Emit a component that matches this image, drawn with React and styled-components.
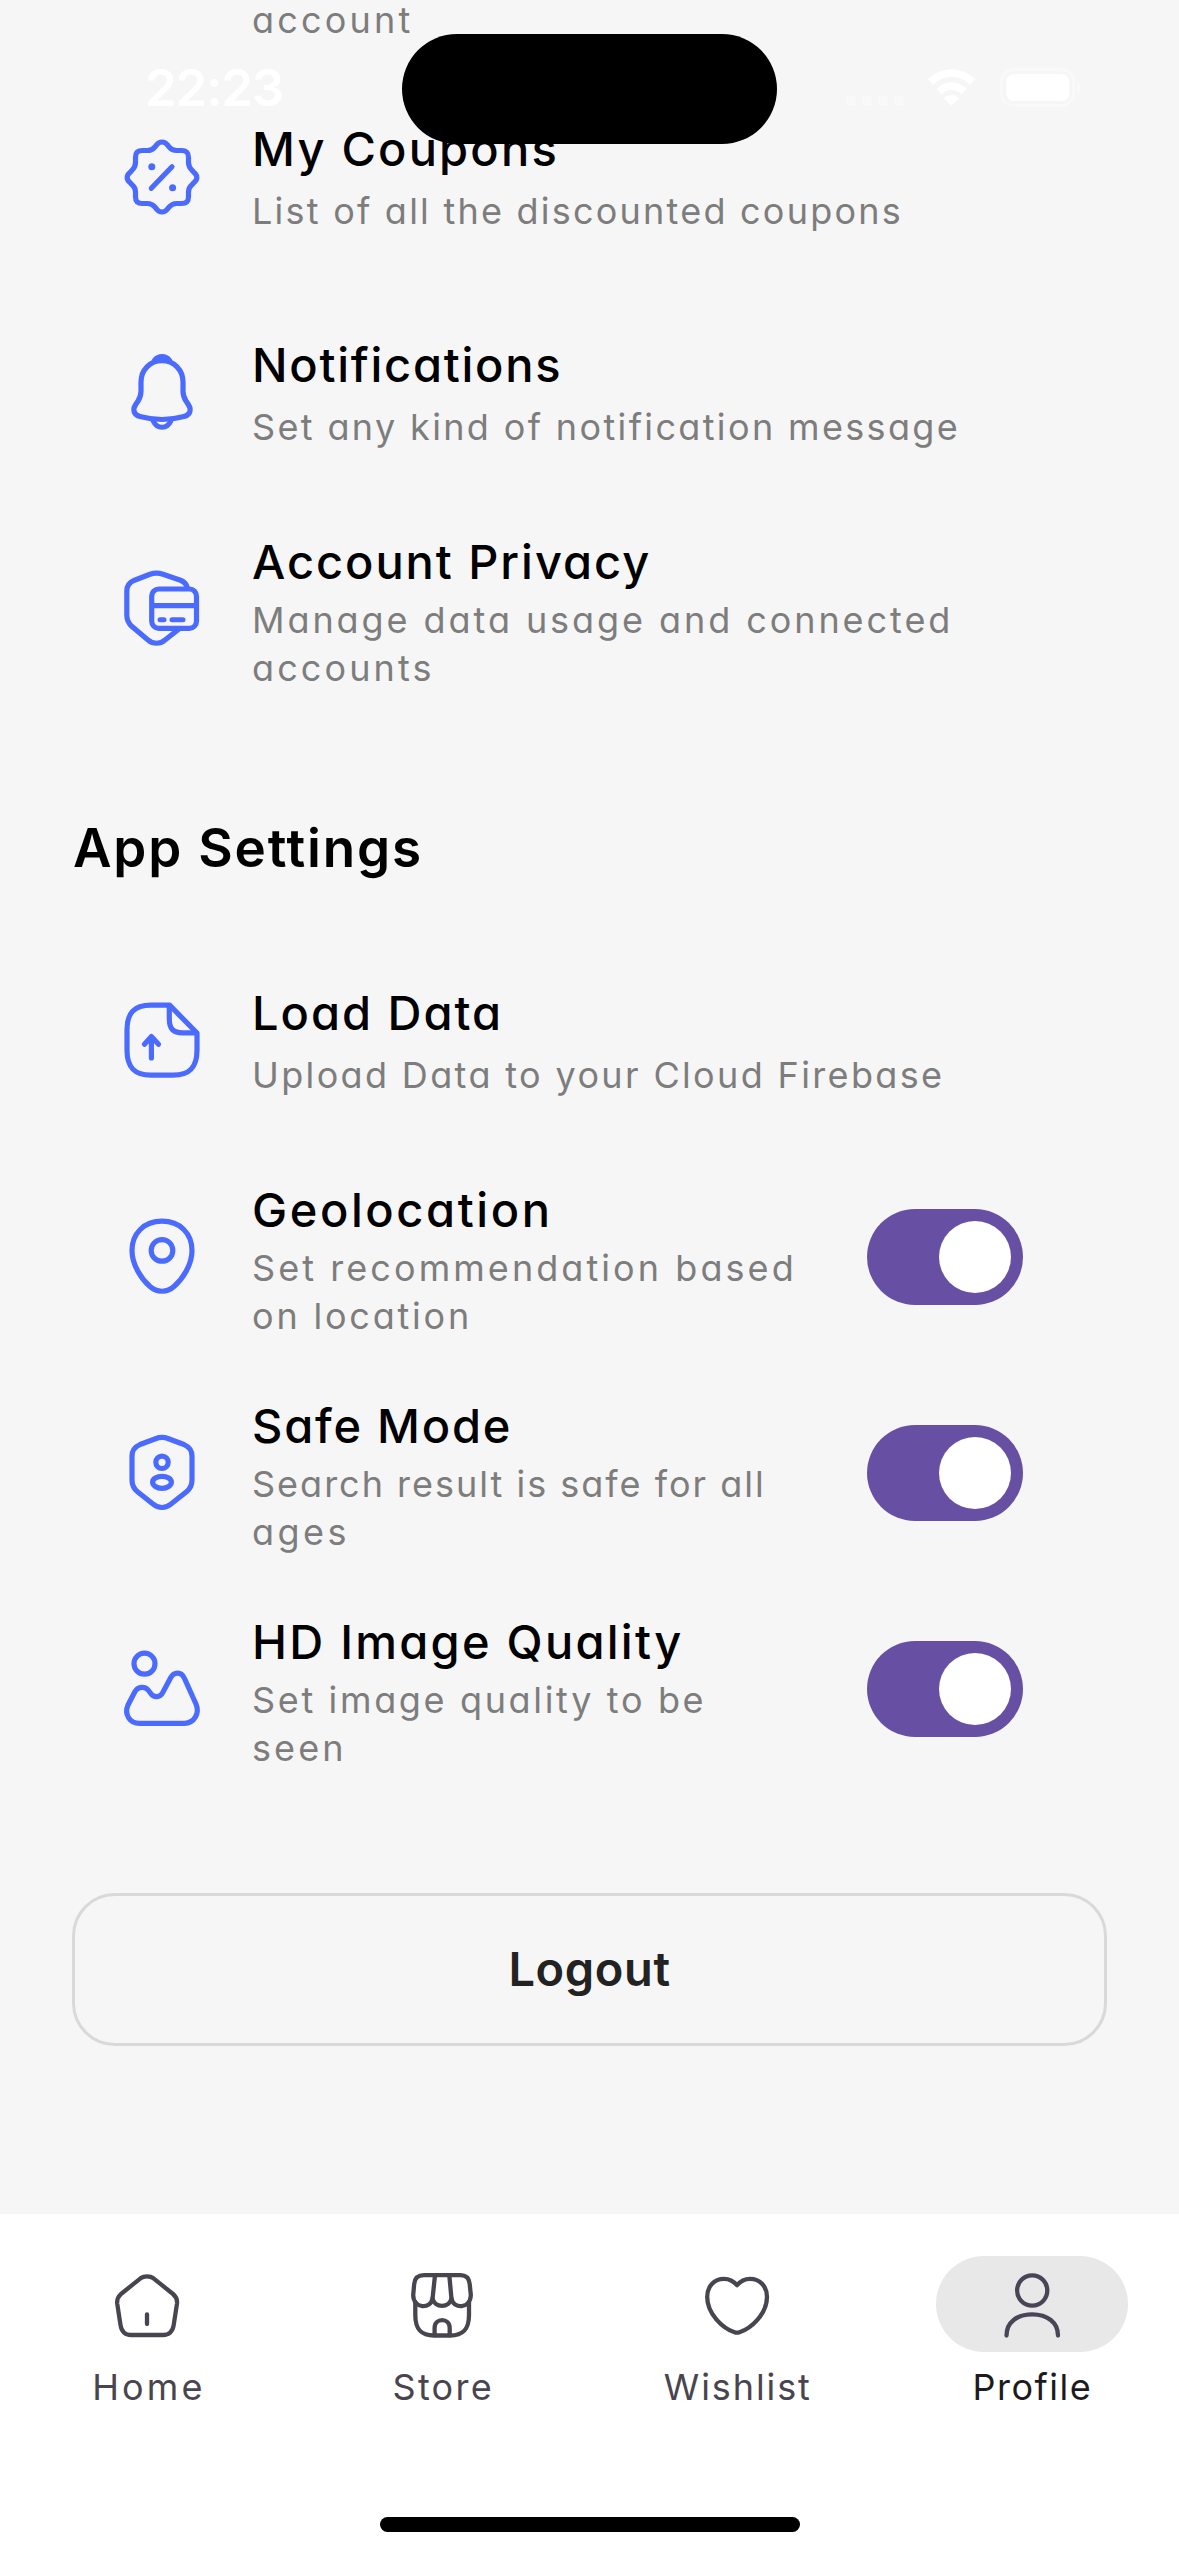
import React from "react";
import styled, { createGlobalStyle } from "styled-components";

const GlobalStyle = createGlobalStyle`
  * { box-sizing: border-box; }
  body { margin: 0; background: #f6f6f6; }
`;

const Screen = styled.div`
  position: relative;
  width: 1179px;
  height: 2556px;
  overflow: hidden;
  display: flex;
  flex-direction: column;
  background: #f6f6f6;
  font-family: Inter, "Liberation Sans", sans-serif;
  font-feature-settings: "cv11";
`;

const Content = styled.main`
  flex: 1;
  min-height: 0;
  display: flex;
  flex-direction: column;
`;

const ClippedRow = styled.div`
  height: 68px;
  flex: none;
  padding-left: 252px;
`;

const Row = styled.div`
  height: 216px;
  flex: none;
  padding: 0 156px 0 117px;
  display: flex;
  align-items: center;
`;

const IconSlot = styled.div`
  width: 90px;
  height: 90px;
  margin-right: 45px;
  padding-top: ${(p) => p.$shift || 0}px;
  flex: none;
  color: #4b6bff;
`;

const Texts = styled.div`
  flex: 1;
  min-width: 0;
  display: flex;
  flex-direction: column;
  gap: ${(p) => (p.$double ? 4 : 8)}px;
  padding-top: ${(p) => (p.$double ? 7 : 2)}px;
`;

const Title = styled.div`
  font-size: 47px;
  line-height: 60px;
  font-weight: 500;
  letter-spacing: ${(p) => p.$track}px;
  color: #000;
  white-space: nowrap;
`;

const Line = styled.div`
  font-size: 36px;
  line-height: 48px;
  font-weight: 400;
  letter-spacing: ${(p) => p.$track}px;
  color: #7d7d7d;
  white-space: nowrap;
`;

const ClippedLine = styled(Line)`
  line-height: 40px;
`;

const Lines = styled.div`
  display: flex;
  flex-direction: column;
`;

const SectionTitle = styled.h2`
  height: 216px;
  flex: none;
  margin: 0;
  padding: 100px 0 0 73px;
  font-size: 53px;
  line-height: 64px;
  font-weight: 600;
  letter-spacing: 1.8px;
  color: #000;
`;

const Switch = styled.button`
  width: 156px;
  height: 96px;
  flex: none;
  margin-top: 2px;
  border: 0;
  border-radius: 48px;
  padding: 12px;
  display: flex;
  justify-content: flex-end;
  background: #6750a4;
`;

const Thumb = styled.span`
  width: 72px;
  height: 72px;
  border-radius: 50%;
  background: #fff;
`;

const Logout = styled.button`
  margin: 97px 72px 0;
  height: 153px;
  flex: none;
  padding: 0 0 2px;
  border: 3px solid #d9d9d9;
  border-radius: 43px;
  background: transparent;
  color: #222;
  font-family: Inter, sans-serif;
  font-size: 47px;
  font-weight: 600;
  letter-spacing: 0.6px;
`;

const NavBar = styled.nav`
  height: 342px;
  flex: none;
  padding-top: 42px;
  background: #fff;
  display: flex;
  flex-direction: column;
  justify-content: space-between;
  align-items: center;
`;

const Tabs = styled.div`
  width: 100%;
  display: grid;
  grid-template-columns: repeat(4, 1fr);
`;

const Tab = styled.div`
  display: flex;
  flex-direction: column;
  align-items: center;
  gap: 11px;
  color: ${(p) => (p.$active ? "#1d1b20" : "#49454f")};
`;

const Pill = styled.div`
  width: 192px;
  height: 96px;
  border-radius: 48px;
  display: flex;
  align-items: center;
  justify-content: center;
  color: ${(p) => (p.$active ? "#4a4458" : "#49454f")};
  background: ${(p) => (p.$active ? "#e8e8e8" : "transparent")};
`;

const TabLabel = styled.div`
  font-size: 36px;
  line-height: 48px;
  letter-spacing: ${(p) => p.$track}px;
  margin-right: -${(p) => p.$track}px;
`;

const HomeBar = styled.div`
  width: 420px;
  height: 15px;
  border-radius: 8px;
  margin-bottom: 24px;
  background: #000;
`;

const StatusBar = styled.header`
  position: absolute;
  inset: 0 0 auto 0;
  height: 177px;
  padding: 0 98px 0 145px;
  display: flex;
  align-items: flex-start;
  justify-content: space-between;
`;

const Clock = styled.div`
  width: 257px;
  padding-top: 57px;
  font-size: 51px;
  line-height: 62px;
  font-weight: 600;
  letter-spacing: -1.2px;
  color: #fff;
`;

const Island = styled.div`
  width: 375px;
  height: 110px;
  margin-top: 34px;
  border-radius: 55px;
  background: #000;
`;

const StatusIcons = styled.div`
  width: 304px;
  height: 42px;
  margin-top: 67px;
  display: flex;
  justify-content: flex-end;
`;

const svgProps = (size) => ({
  width: size,
  height: size,
  viewBox: `0 0 ${size} ${size}`,
  fill: "none",
  stroke: "currentColor",
  strokeLinecap: "round",
  strokeLinejoin: "round",
  display: "block",
});

const Icon = ({ children }) => (
  <svg {...svgProps(90)} strokeWidth="5.2">{children}</svg>
);

const TabIcon = ({ children }) => (
  <svg {...svgProps(72)} strokeWidth="4.3">{children}</svg>
);

const icons = {
  coupon: (
    <Icon>
      <path d="M25.5 18.5H30.5C34 18.5 36 17.3 38 14.8L39.5 13C42.5 9 47.5 9 50.5 13L52 14.8C54 17.3 56 18.5 59.5 18.5H64.5C69.5 18.5 71.5 20.5 71.5 25.5V30.5C71.5 34 72.7 36 75.2 38.5L77 40.5C80.8 43.5 80.8 47.5 77 50.5L75.2 52.5C72.7 54.5 71.5 56.5 71.5 60V64.5C71.5 69.5 69.5 71.5 64.5 71.5H59.5C56 71.5 54 72.7 52 75.2L50.5 77C47.5 81 42.5 81 39.5 77L38 75.2C36 72.7 34 71.5 30.5 71.5H25.5C20.5 71.5 18.5 69.5 18.5 64.5V60C18.5 56.5 17.3 54.5 14.8 52.5L13 50.5C9.2 47.5 9.2 43.5 13 40.5L14.8 38.5C17.3 36 18.5 34 18.5 30.5V25.5C18.5 20.5 20.5 18.5 25.5 18.5Z" />
      <path d="M34.3 56.3L55 34.8" />
      <circle cx="34.8" cy="34.7" r="3.5" fill="currentColor" stroke="none" />
      <circle cx="55.6" cy="55.7" r="3.5" fill="currentColor" stroke="none" />
    </Icon>
  ),
  bell: (
    <Icon>
      <path d="M45 13.7C33 13.7 24 23 24 35V44C24 48 23 51 21 54L18.7 57.5C15 63 17 68 23 69.5C37 73.3 53 73.3 67 69.5C73 68 75 63 71.3 57.5L69 54C67 51 66 48 66 44V35C66 23 57 13.7 45 13.7Z" />
      <path d="M37.5 13.3C41.5 8.5 48.5 8.5 52.5 13.3Z" fill="currentColor" />
      <path d="M36 73.5C40 82.5 50 82.5 54 73.5" />
    </Icon>
  ),
  privacy: (
    <Icon>
      <path d="M70 23.5C69 20.5 67 18.5 63.5 17.2L46 11.3C41.5 9.8 37.5 9.8 33 11.3L17.5 17.2C12 19.5 9.8 22.5 9.8 28V52C9.8 57 11 60 15 63.5L31 77C36 81.3 43 81.3 48 77L62 66" />
      <rect x="34.7" y="26" width="44.8" height="39.3" rx="7" />
      <path d="M36 42.7H79" />
      <path d="M43 56.7H47M55 56.7H66" strokeWidth="5" />
    </Icon>
  ),
  upload: (
    <Icon>
      <path d="M52.6 9.2H34C17 9.2 10 17 10 34V54C10 71 17 79.2 34 79.2H56C73 79.2 80 71 80 54V37Z" />
      <path d="M52.3 9.5V22.5C52.3 33 56 36.9 66 36.9H79.5" />
      <path d="M34.4 62V41M27.5 48.3L34.4 40.6L41.5 48.3" />
    </Icon>
  ),
  pin: (
    <Icon>
      <path d="M45 9.2C27 9.2 15 21.5 15 38.5C15 53 24.5 67 33 74.5C40 80.8 50 80.8 57 74.5C65.5 67 75 53 75 38.5C75 21.5 63 9.2 45 9.2Z" />
      <circle cx="45" cy="38.4" r="10.8" />
    </Icon>
  ),
  safe: (
    <Icon>
      <path d="M38.5 10.7C43 9 47 9 51.5 10.7L67 16.5C72.5 19 75 22 75 28V52C75 57.5 73.5 60.5 69.5 63.7L54 76C48.5 80.5 41.5 80.5 36 76L20.5 63.7C16.5 60.5 15 57.5 15 52V28C15 22 17.5 19 23 16.5Z" />
      <circle cx="45" cy="34.3" r="6.2" />
      <ellipse cx="45" cy="54.3" rx="9.4" ry="6" />
    </Icon>
  ),
  image: (
    <Icon>
      <circle cx="27.5" cy="19.7" r="10.5" />
      <path d="M11 61L18 47.5C21 42.5 28 42 31.5 46.5L34 49.8C37 54 43 53.5 45.5 49L53.5 34C57 27.5 64.5 27.5 67.5 34.5L79 60C83 69.5 77 79.3 67.5 79.3H22.5C12.5 79.3 7 70 11 61Z" />
    </Icon>
  ),
  home: (
    <TabIcon>
      <path d="M29.5 10.3C33 7.7 39 7.7 42.5 10.3L62 26C65.5 29 66.5 31.5 66 35.5L62.7 57C61.7 63.5 58 67 52 67H20C14 67 10.5 63.5 9.5 57L6.2 35.5C5.7 31.5 6.7 29 10 26Z" />
      <path d="M36 46.5V56" />
    </TabIcon>
  ),
  store: (
    <TabIcon>
      <path d="M18 7.2H54.5C60.5 7.2 63 10 63.7 16L64.8 27C64.5 41.5 47 41 45.5 30.5C43.5 40.2 28.5 40.2 26.5 30.5C25 41 7.5 41.5 7.2 27L8.2 16C8.8 10 11.5 7.2 18 7.2Z" />
      <path d="M29 7.2L26.5 31M43.3 7.2L45.5 31" />
      <path d="M9.3 34V47C9.3 61.5 15 67.5 28 67.5H44C57 67.5 63 61.5 63 47V34" />
      <path d="M28.6 67V60C28.6 49.5 43.7 49.5 43.7 60V67" />
    </TabIcon>
  ),
  heart: (
    <TabIcon>
      <path d="M36 17.2C32.5 13 28 10.8 23 10.8C13 10.8 6.2 18.5 6.2 29C6.2 46 22 60.5 33.5 64.2Q36 65.2 38.5 64.2C50 60.5 66 46 66 29C66 18.5 59 10.8 49 10.8C44 10.8 39.5 13 36 17.2Z" />
    </TabIcon>
  ),
  person: (
    <TabIcon>
      <circle cx="36.2" cy="22.5" r="15.1" />
      <path d="M10.5 67.5C10.5 54.5 21 46.3 36.2 46.3C51.3 46.3 62 54.5 62 67.5" />
    </TabIcon>
  ),
};

const accountItems = [
  { icon: "coupon", shift: 1, title: ["My Coupons", 2.2], lines: [["List of all the discounted coupons", 2.23]] },
  { icon: "bell", title: ["Notifications", 1.75], lines: [["Set any kind of notification message", 2.36]] },
  {
    icon: "privacy",
    title: ["Account Privacy", 1.95],
    lines: [["Manage data usage and connected", 2.93], ["accounts", 3.1]],
  },
];

const appItems = [
  { icon: "upload", shift: 1, title: ["Load Data", 2], lines: [["Upload Data to your Cloud Firebase", 2.36]] },
  {
    icon: "pin",
    shift: 1,
    title: ["Geolocation", 2.6],
    lines: [["Set recommendation based", 3.07], ["on location", 2.8]],
    toggle: true,
  },
  {
    icon: "safe",
    shift: 1,
    title: ["Safe Mode", 1.8],
    lines: [["Search result is safe for all", 2], ["ages", 3.5]],
    toggle: true,
  },
  {
    icon: "image",
    shift: 1,
    title: ["HD Image Quality", 2.25],
    lines: [["Set image quality to be", 2.65], ["seen", 3.1]],
    toggle: true,
  },
];

const tabs = [
  { icon: "home", label: "Home", track: 3.2 },
  { icon: "store", label: "Store", track: 2.3 },
  { icon: "heart", label: "Wishlist", track: 1.9 },
  { icon: "person", label: "Profile", track: 1.5, active: true },
];

const SettingRow = ({ icon, shift, title, lines, toggle }) => (
  <Row>
    <IconSlot $shift={shift}>{icons[icon]}</IconSlot>
    <Texts $double={lines.length > 1}>
      <Title $track={title[1]}>{title[0]}</Title>
      <Lines>
        {lines.map(([text, track]) => (
          <Line key={text} $track={track}>{text}</Line>
        ))}
      </Lines>
    </Texts>
    {toggle && (
      <Switch role="switch" aria-checked="true">
        <Thumb />
      </Switch>
    )}
  </Row>
);

const Status = () => (
  <StatusBar>
    <Clock>22:23</Clock>
    <Island />
    <StatusIcons>
      <svg width="240" height="42" viewBox="0 0 240 42" fill="none">
        <g fill="#fff" opacity="0.4">
          <circle cx="10" cy="34" r="5.3" />
          <circle cx="26" cy="34" r="5.3" />
          <circle cx="42" cy="34" r="5.3" />
          <circle cx="58" cy="34" r="5.3" />
        </g>
        <g stroke="#fff" strokeWidth="7.5">
          <path d="M89.5 15C101.5 3 119.5 3 131.5 15" />
          <path d="M98 24.5C105.5 17 115.5 17 123 24.5" />
        </g>
        <path d="M103 31.2C107 27 114 27 118 31.2L110.5 39Z" fill="#fff" />
        <rect x="160.5" y="2.5" width="72" height="36" rx="12" stroke="#fff" strokeWidth="3" opacity="0.4" />
        <rect x="165" y="7" width="63.5" height="27" rx="8" fill="#fff" />
        <path d="M236 15C240.500 17 240.500 24 236 26Z" fill="#fff" opacity="0.45" />
      </svg>
    </StatusIcons>
  </StatusBar>
);

export default function App() {
  return (
    <Screen>
      <GlobalStyle />
      <Content>
        <ClippedRow>
          <ClippedLine $track={3.2}>account</ClippedLine>
        </ClippedRow>
        {accountItems.map((item) => (
          <SettingRow key={item.icon} {...item} />
        ))}
        <SectionTitle>App Settings</SectionTitle>
        {appItems.map((item) => (
          <SettingRow key={item.icon} {...item} />
        ))}
        <Logout>Logout</Logout>
      </Content>
      <NavBar>
        <Tabs>
          {tabs.map(({ icon, label, track, active }) => (
            <Tab key={label} $active={active}>
              <Pill $active={active}>{icons[icon]}</Pill>
              <TabLabel $track={track}>{label}</TabLabel>
            </Tab>
          ))}
        </Tabs>
        <HomeBar />
      </NavBar>
      <Status />
    </Screen>
  );
}
